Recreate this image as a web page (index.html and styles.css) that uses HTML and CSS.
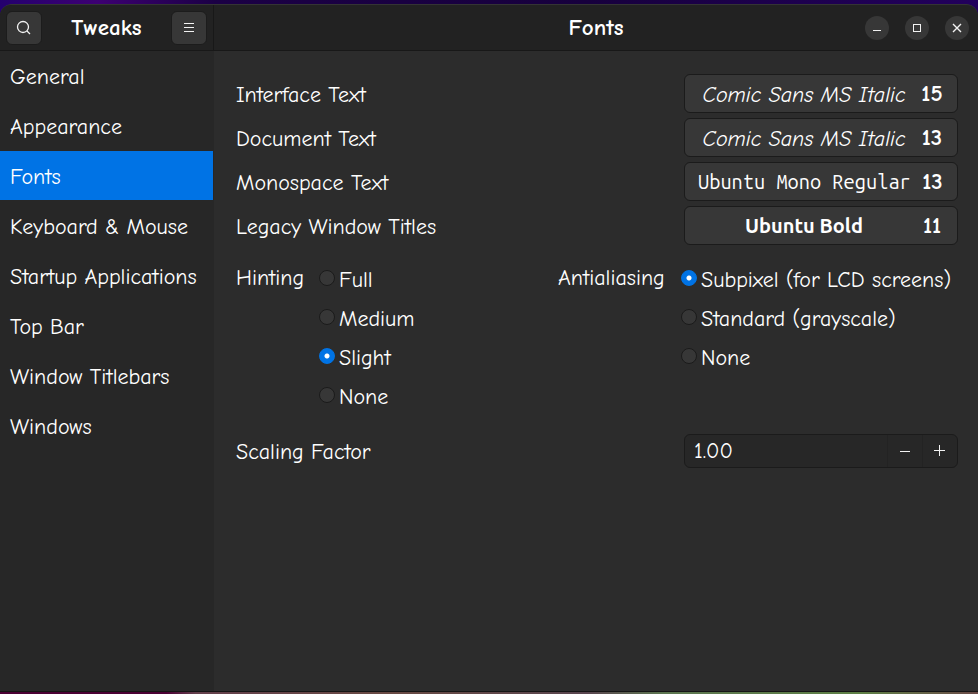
FILE: index.html
```
<!DOCTYPE html>
<html lang="en">
<head>
<meta charset="utf-8">
<meta name="viewport" content="width=device-width, initial-scale=1">
<title>Tweaks</title>
<link rel="stylesheet" href="styles.css">
</head>
<body>
<div class="window">
  <aside class="side">
    <header class="bar side-bar">
      <button class="tool" type="button" aria-label="Search">
        <svg class="search" width="16" height="16" viewBox="0 0 16 16"><circle cx="7" cy="7" r="5.500"/><path d="M11 11 14 14"/></svg>
      </button>
      <h1>Tweaks</h1>
      <button class="tool" type="button" aria-label="Menu">
        <svg width="16" height="16" viewBox="0 0 16 16" shape-rendering="crispEdges"><path d="M3 3.500H13M3 7.500H13M3 11.500H13"/></svg>
      </button>
    </header>
    <nav class="nav">
      <a href="#general">General</a>
      <a href="#appearance">Appearance</a>
      <a href="#fonts" class="current" aria-current="page">Fonts</a>
      <a href="#keyboard">Keyboard &amp; Mouse</a>
      <a href="#startup">Startup Applications</a>
      <a href="#topbar">Top Bar</a>
      <a href="#titlebars">Window Titlebars</a>
      <a href="#windows">Windows</a>
    </nav>
  </aside>
  <main class="main">
    <header class="bar main-bar">
      <h2>Fonts</h2>
      <div class="controls">
        <button type="button" aria-label="Minimize"><svg width="16" height="16" viewBox="0 0 16 16" shape-rendering="crispEdges"><path d="M4 10.500H12"/></svg></button>
        <button type="button" aria-label="Maximize"><svg width="16" height="16" viewBox="0 0 16 16" shape-rendering="crispEdges"><path d="M4.500 4.500H11.500V11.500H4.500Z"/></svg></button>
        <button type="button" aria-label="Close"><svg class="close" width="16" height="16" viewBox="0 0 16 16"><path d="M4 4 12 12M12 4 4 12"/></svg></button>
      </div>
    </header>
    <form class="content">
      <div class="fonts">
        <label for="f1">Interface Text</label>
        <button id="f1" class="picker" type="button"><span class="name italic">Comic Sans MS Italic</span><b>15</b></button>
        <label for="f2">Document Text</label>
        <button id="f2" class="picker" type="button"><span class="name italic">Comic Sans MS Italic</span><b>13</b></button>
        <label for="f3">Monospace Text</label>
        <button id="f3" class="picker" type="button"><span class="name mono">Ubuntu Mono Regular</span><b>13</b></button>
        <label for="f4">Legacy Window Titles</label>
        <button id="f4" class="picker" type="button"><span class="name bold">Ubuntu Bold</span><b>11</b></button>
      </div>
      <div class="render">
        <div class="group hinting" role="radiogroup" aria-labelledby="hint">
          <span id="hint">Hinting</span>
          <div class="options">
            <label><input type="radio" name="hinting">Full</label>
            <label><input type="radio" name="hinting">Medium</label>
            <label><input type="radio" name="hinting" checked>Slight</label>
            <label><input type="radio" name="hinting">None</label>
          </div>
        </div>
        <div class="group antialiasing" role="radiogroup" aria-labelledby="anti">
          <span id="anti">Antialiasing</span>
          <div class="options">
            <label><input type="radio" name="aa" checked>Subpixel (for LCD screens)</label>
            <label><input type="radio" name="aa">Standard (grayscale)</label>
            <label><input type="radio" name="aa">None</label>
          </div>
        </div>
      </div>
      <div class="scaling">
        <label for="scale">Scaling Factor</label>
        <div class="spin">
          <input id="scale" type="text" inputmode="decimal" value="1.00">
          <button type="button" aria-label="Decrease"><svg width="16" height="16" viewBox="0 0 16 16" shape-rendering="crispEdges"><path d="M3 8.500H13"/></svg></button>
          <button type="button" aria-label="Increase"><svg width="16" height="16" viewBox="0 0 16 16" shape-rendering="crispEdges"><path d="M2 7.500H13M7.500 2V13"/></svg></button>
        </div>
      </div>
    </form>
  </main>
</div>
</body>
</html>
```
FILE: styles.css
```
* { box-sizing: border-box; }

body {
  margin: 0;
  min-height: 100vh;
  display: flex;
  padding: 4px 0 2px;
  background:
    linear-gradient(90deg, #4b0034 0 17%, #64404c 20%, #694a43 40%, #59454f 60%, #5c7650 68%, #5e8045 88%, #6b4a48) bottom / 100% 2px no-repeat,
    linear-gradient(90deg, #24006e, #3d0072 10%, #1b0045 22%, #17003d 60%, #22005c) #1b0045;
  color: #fff;
  font: 22px/30px "Comic Sans MS", "Comic Neue", Lato, sans-serif;
}

button, input { font: inherit; color: inherit; margin: 0; }
button { padding: 0; border: 0; background: none; }
svg { display: block; fill: none; stroke: #f2f2f2; stroke-width: 1; }
h1, h2 { margin: 0; font-size: 23px; font-weight: 700; }

.window {
  flex: 1;
  display: flex;
  border-top: 1px solid #343434;
  border-bottom: 1px solid #151515;
  border-radius: 12px 12px 0 0;
  overflow: hidden;
  background: #2c2c2c;
}

.bar {
  height: 46px;
  display: flex;
  align-items: center;
  background: #222;
  border-bottom: 1px solid #181818;
}

.side { width: 214px; flex: none; background: #272727; }
.side-bar { justify-content: space-between; padding: 0 6px; border-right: 1px solid #181818; }
.tool {
  width: 36px;
  height: 34px;
  display: grid;
  place-items: center;
  background: #373737;
  border: 1px solid #1c1c1c;
  border-radius: 6px;
}
.search { stroke-width: 1.3; }

.nav { display: flex; flex-direction: column; gap: 1px; margin-right: 1px; }
.nav a { padding: 11px 10px 8px; color: inherit; text-decoration: none; white-space: nowrap; }
.nav .current { background: #0073e5; }

.main { flex: 1; min-width: 0; }
.main-bar { display: grid; grid-template-columns: 1fr auto 1fr; }
.main-bar h2 { grid-column: 2; }
.controls { display: flex; justify-content: flex-end; gap: 16px; padding-right: 9px; }
.controls button {
  width: 24px;
  height: 24px;
  display: grid;
  place-items: center;
  border-radius: 50%;
  background: #373737;
}
.close { stroke-width: 1.4; }

.content { padding: 23px 20px 20px 22px; }
.fonts { display: grid; grid-template-columns: 1fr 274px; gap: 5px; align-items: center; }
.fonts label, .scaling label { padding-top: 2px; }
.picker {
  height: 39px;
  display: flex;
  align-items: center;
  gap: 10px;
  padding: 0 13px;
  background: #373737;
  border: 1px solid #1b1b1b;
  border-radius: 6px;
  white-space: nowrap;
}
.picker b { width: 24px; font-size: 23px; }
.name { flex: 1; }
.italic { padding-top: 2px; font-style: italic; }
.mono { font-family: "Ubuntu Mono", "Liberation Mono", monospace; font-size: 20px; }
.bold { font-family: Ubuntu, "Noto Sans", sans-serif; font-size: 20px; font-weight: 700; }

.render { display: grid; grid-template-columns: 1fr 400px; margin: 14px 0 19px; }
.group { display: grid; align-items: start; line-height: 39px; white-space: nowrap; }
.hinting { grid-template-columns: 83px 1fr; }
.antialiasing { grid-template-columns: 123px 1fr; }
.options label { display: flex; align-items: center; gap: 4px; padding-top: 4px; line-height: 35px; }
.options input {
  appearance: none;
  width: 16px;
  height: 16px;
  margin-bottom: 6px;
  border: 1px solid #1b1b1b;
  border-radius: 50%;
  background: #373737;
}
.options input:checked { border-color: #0073e5; background: radial-gradient(circle, #fff 0 2px, #0073e5 3px); }

.scaling { display: grid; grid-template-columns: 1fr 274px; align-items: center; }
.spin {
  display: flex;
  height: 34px;
  background: #272727;
  border: 1px solid #1b1b1b;
  border-radius: 6px;
}
.spin input { flex: 1; min-width: 0; padding: 0 9px; border: 0; background: none; outline: 0; }
.spin button { width: 35px; display: grid; place-items: center; border-left: 1px solid #232323; }
```
